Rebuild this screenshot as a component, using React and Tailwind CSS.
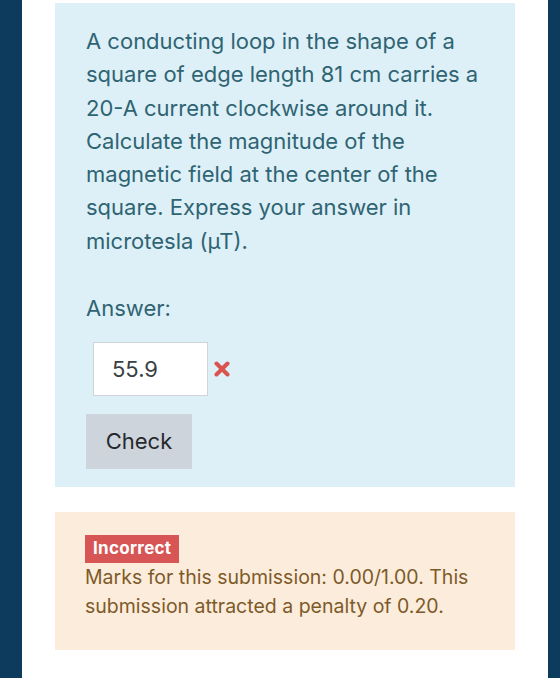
export default function App() {
  return (
    <div className="flex w-[560px] h-[678px] bg-[#0d3b5e] font-['Inter',sans-serif] overflow-hidden">
      <div className="w-[22px] shrink-0" />
      <div className="flex-1 bg-white pt-[3px] px-[33px]">
        {/* question */}
        <div className="bg-[#def0f7] text-[#2f6473] pl-[31px] pr-[20px] pt-[22px] pb-[18px]">
          <p className="text-[22px] leading-[33.3px]">
            A conducting loop in the shape of a square of edge length 81 cm
            carries a 20-A current clockwise around it. Calculate the magnitude
            of the magnetic field at the center of the square. Express your
            answer in microtesla (µT).
          </p>
          <div className="mt-[34px] text-[22px] leading-[33px]">Answer:</div>
          <div className="mt-[17px] ml-[7px] flex items-center gap-[6px]">
            <input
              type="text"
              defaultValue="55.9"
              readOnly
              className="w-[115px] h-[54px] bg-white border border-[#cfd4da] px-[18px] text-[22px] text-[#3a3f44] outline-none"
            />
            <svg width="16" height="16" viewBox="0 0 16 16">
              <path d="M2.5 2.5 L13.5 13.5 M13.5 2.5 L2.5 13.5" stroke="#d9534f" strokeWidth="4" strokeLinecap="round" />
            </svg>
          </div>
          <button className="mt-[18px] w-[106px] h-[55px] bg-[#ced4dc] text-[#26292d] text-[22px]">
            Check
          </button>
        </div>

        {/* outcome */}
        <div className="mt-[25px] bg-[#fcecdb] text-[#7d5a29] pl-[30px] pr-[20px] pt-[23px] pb-[29px]">
          <span className="inline-flex items-center h-[28px] px-[8px] bg-[#d75555] text-white text-[17px] font-bold tracking-[0.3px]">
            Incorrect
          </span>
          <p className="text-[19.5px] leading-[29px]">
            Marks for this submission: 0.00/1.00. This submission attracted a
            penalty of 0.20.
          </p>
        </div>
      </div>
      <div className="w-[12px] shrink-0" />
    </div>
  );
}
